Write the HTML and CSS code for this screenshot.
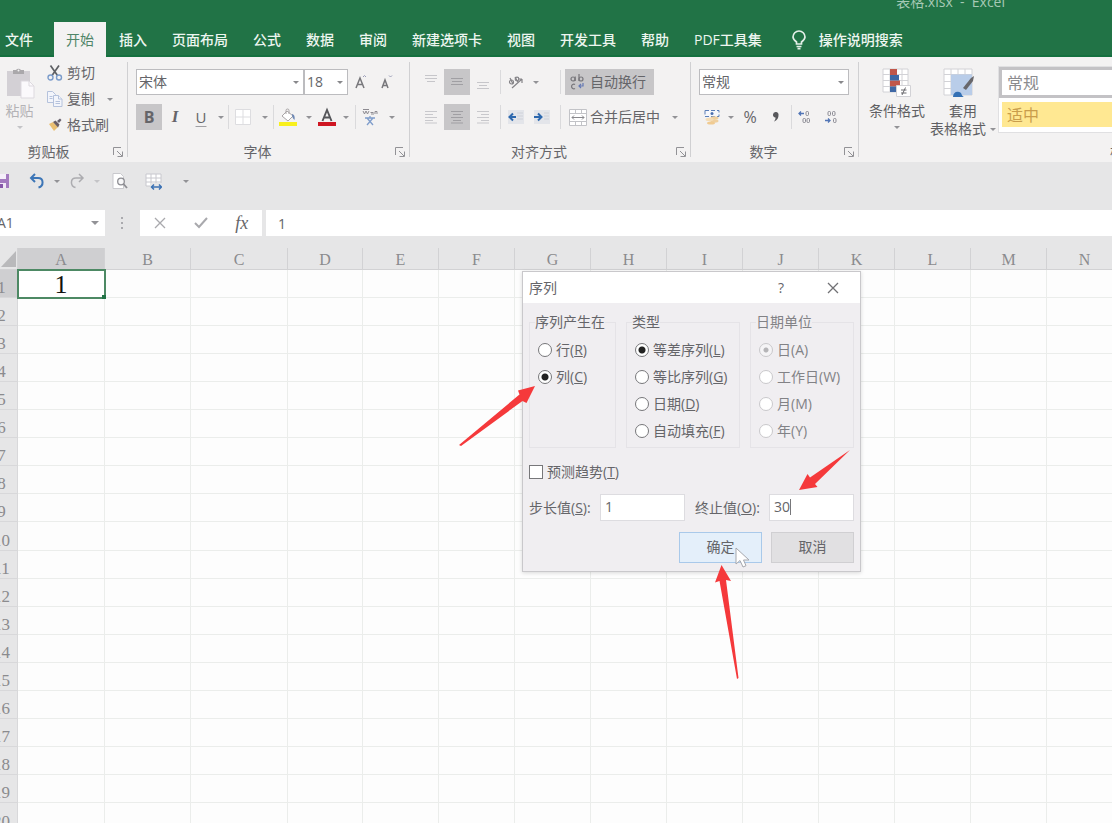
FILE: index.html
```html
<!DOCTYPE html>
<html lang="zh-CN">
<head>
<meta charset="utf-8">
<title>表格.xlsx - Excel</title>
<link rel="stylesheet" href="styles.css">
</head>
<body>
<div class="app">
  <header class="header">
    <div class="titlebar"><span>表格.xlsx&nbsp; -&nbsp; Excel</span></div>
    <nav class="tabs">
      <button class="tab file">文件</button>
      <button class="tab active">开始</button>
      <button class="tab">插入</button>
      <button class="tab">页面布局</button>
      <button class="tab">公式</button>
      <button class="tab">数据</button>
      <button class="tab">审阅</button>
      <button class="tab">新建选项卡</button>
      <button class="tab">视图</button>
      <button class="tab">开发工具</button>
      <button class="tab">帮助</button>
      <button class="tab">PDF工具集</button>
      <button class="tab tell">
        <svg width="16" height="20" viewBox="0 0 16 20" fill="none" stroke="#e3efe8" stroke-width="1.7"><path d="M5.5 14v-2C3 10 2 8.500 2 7a6 6 0 0 1 12 0c0 1.500-1 3-3.500 5v2zM5.500 16.500h5M6.500 18.700h3"/></svg>
        操作说明搜索</button>
    </nav>
  </header>

  <section class="ribbon">
    <div class="group clipboard">
      <div class="clip-body">
        <button class="big paste" disabled>
          <svg width="30" height="32" viewBox="0 0 30 32"><path d="M2 4h23v25H2z" fill="#d3d0d5"/><path d="M8 3h3a3 3 0 0 1 5 0h3v4H8z" fill="#aaa8ab"/><circle cx="13.500" cy="3.500" r="1" fill="#f3f2f2"/><path d="M16 14h8l5 5v12H16z" fill="#fbf9fc" stroke="#ddd9df"/><path d="M24 14v5h5" fill="none" stroke="#ddd9df"/></svg>
          <span>粘贴</span><i class="caret pale"></i>
        </button>
        <div class="clip-list">
          <button class="line"><svg width="16" height="16" viewBox="0 0 16 16" fill="none"><path d="M3.500 0.500l7 10M12 0.500l-7 10" stroke="#5e6064" stroke-width="1.700"/><circle cx="3.500" cy="12.500" r="2.500" stroke="#7b9ccb" stroke-width="1.400"/><circle cx="12" cy="12.500" r="2.500" stroke="#7b9ccb" stroke-width="1.400"/></svg>剪切</button>
          <button class="line"><svg width="16" height="16" viewBox="0 0 16 16" fill="#f3f5fb" stroke="#b5c2dc"><path d="M.5 .5h5l3 3v8h-8z"/><path d="M6.500 4.500h5l3.500 3.500v7.500H6.500z"/><path d="M11.500 4.500V8H15M8.500 10.500h4.500M8.500 12.500h4.500M2.500 5.500h3M2.500 7.500h3"/></svg>复制<i class="caret"></i></button>
          <button class="line"><svg width="16" height="16" viewBox="0 0 16 16"><path d="M2 7l4-2 5 5-4 4z" fill="#eabf72"/><path d="M6 5l2.500-1.500 4 4-1.500 3z" fill="#6b5d62"/><path d="M10 4l3-2.500 1.500 1.500-2.500 3z" fill="#6b6470"/></svg>格式刷</button>
        </div>
      </div>
      <div class="foot"><span>剪贴板</span><svg class="launch" width="10" height="10"><use href="#launch"/></svg></div>
    </div>

    <div class="group font">
      <div class="row">
        <span class="pick font-name"><select aria-label="字体"><option>宋体</option></select></span><span class="pick font-size"><select aria-label="字号"><option>18</option></select></span>
        <button class="tool" aria-label="增大字号"><svg width="16" height="16" viewBox="0 0 16 16" fill="none" stroke="#77777b" stroke-width="1.500"><path d="M3 14L7 4l4 10M4.500 10.500h5"/><path d="M10 3l1.500-1.500L13 3" stroke="#9a9db8" stroke-width="1"/></svg></button>
        <button class="tool" aria-label="减小字号"><svg width="16" height="16" viewBox="0 0 16 16" fill="none" stroke="#77777b" stroke-width="1.500"><path d="M3 14l3-8 3 8M4 11.500h4"/><path d="M10 1.500L11.500 3 13 1.500" stroke="#9a9db8" stroke-width="1"/></svg></button>
      </div>
      <div class="row">
        <button class="tool on bold">B</button><button class="tool italic">I</button><button class="tool under">U</button><button class="drop short" aria-label="下划线选项"><i class="caret"></i></button>
        <i class="sep"></i>
        <button class="tool wide" aria-label="边框"><svg width="16" height="16" viewBox="0 0 16 16"><path d="M.5 .5h15v15H.5zM8 0v16M0 8h16" fill="#fff" stroke="#dddde0"/></svg></button><button class="drop" aria-label="边框选项"><i class="caret"></i></button>
        <i class="sep"></i>
        <button class="tool wide" aria-label="填充颜色"><svg width="20" height="20" viewBox="0 0 20 20"><path d="M4 9l5-5 6 5-5 5z" fill="#fff" stroke="#a9a5a6"/><path d="M8 7V3.500a1.500 1.500 0 0 1 3 0V7" fill="none" stroke="#a9a5a6"/><path d="M14 7c2.500.5 3 3 2.500 6-1.500-1-2.500-3-2.500-6z" fill="#6d88b5"/><path d="M1 15h18v4H1z" fill="#f8f01d"/></svg></button><button class="drop short" aria-label="填充选项"><i class="caret"></i></button>
        <button class="tool slim" aria-label="字体颜色"><svg width="18" height="20" viewBox="0 0 18 20"><path d="M4.500 14L9 3l4.500 11M6 10.500h6" fill="none" stroke="#55565a" stroke-width="1.900"/><path d="M0 15h18v4H0z" fill="#cf1622"/></svg></button><button class="drop" aria-label="字体颜色选项"><i class="caret"></i></button>
        <i class="sep pinyin-sep"></i>
        <button class="tool wide" aria-label="拼音"><svg width="16" height="18" viewBox="0 0 16 18" fill="none"><path d="M1 3l1.500 3L4 3l1.500 3L7 3M8.500 4.500h3M9 6h3M13 6V3.500h2V6M1 1.500h6" stroke="#8d8b91"/><path d="M3 10h10M8 8v2M5 10l6 7M11 10l-6 7" stroke="#7f9dcb" stroke-width="1.300"/></svg></button><button class="drop" aria-label="拼音选项"><i class="caret"></i></button>
      </div>
      <div class="foot"><span>字体</span><svg class="launch" width="10" height="10"><use href="#launch"/></svg></div>
    </div>

    <div class="group align">
      <div class="row">
        <button class="tool" aria-label="顶端对齐"><svg width="14" height="16" viewBox="0 0 14 16" stroke="#c6c6ca"><path d="M1 1.500h12M1 4.500h12M3 7.500h8"/></svg></button><button class="tool on" aria-label="垂直居中"><svg width="14" height="14" viewBox="0 0 14 14" stroke="#a09fa3"><path d="M1 3.500h12M2 6.500h10M1 9.500h12"/></svg></button><button class="tool" aria-label="底端对齐"><svg width="14" height="16" viewBox="0 0 14 16" stroke="#c6c6ca"><path d="M1 8.500h12M3 11.500h8M1 14.500h12"/></svg></button>
        <i class="sep"></i>
        <button class="tool" aria-label="方向"><svg width="16" height="16" viewBox="0 0 16 16" fill="none" stroke="#858488" stroke-width="1.200"><path d="M4 14L14 5M14 5h-4M14 5v4"/><circle cx="3.500" cy="8" r="2"/><path d="M5 10L2 4M7 3l3 5"/><circle cx="9" cy="5" r="1.800"/></svg></button><button class="drop tight" aria-label="方向选项"><i class="caret"></i></button>
        <i class="sep push"></i>
        <button class="label-btn on"><svg width="16" height="18" viewBox="0 0 16 18" fill="none" stroke="#77767b" stroke-width="1.200"><circle cx="4" cy="6" r="2"/><path d="M6.200 3.500V8M10 1v7"/><circle cx="12" cy="6" r="2"/><path d="M6 11.500a2.300 2.300 0 1 0 0 4"/><path d="M14 10v3h-4M12 11l-2 2 2 2" stroke="#6478b4"/></svg>自动换行</button>
      </div>
      <div class="row">
        <button class="tool" aria-label="左对齐"><svg width="14" height="14" viewBox="0 0 14 14" stroke="#c8c8cc"><path d="M1 1.500h12M1 4.500h8M1 7.500h12M1 10.500h8M1 13h12"/></svg></button><button class="tool on" aria-label="居中"><svg width="14" height="14" viewBox="0 0 14 14" stroke="#a09fa3"><path d="M1 1.500h12M3 4.500h8M1 7.500h12M3 10.500h8M1 13h12"/></svg></button><button class="tool" aria-label="右对齐"><svg width="14" height="14" viewBox="0 0 14 14" stroke="#c8c8cc"><path d="M1 1.500h12M5 4.500h8M1 7.500h12M5 10.500h8M1 13h12"/></svg></button>
        <i class="sep"></i>
        <button class="tool" aria-label="减少缩进"><svg width="16" height="14" viewBox="0 0 16 14"><path d="M0 0h16v14H0z" fill="#e3e5ea"/><path d="M9 3h6M9 6h6M9 9h6" stroke="#cfd2d9"/><path d="M8 7H2M5 3.500L1.500 7 5 10.500" fill="none" stroke="#2d68ae" stroke-width="2"/></svg></button><button class="tool" aria-label="增加缩进"><svg width="16" height="14" viewBox="0 0 16 14"><path d="M0 0h16v14H0z" fill="#e3e5ea"/><path d="M10 3h5M10 6h5M10 9h5" stroke="#cfd2d9"/><path d="M0 7h7M4 3.500L7.500 7 4 10.500" fill="none" stroke="#2d68ae" stroke-width="2"/></svg></button>
        <i class="sep push-s"></i>
        <button class="label-btn merge"><svg width="18" height="17" viewBox="0 0 18 17" fill="none" stroke="#c2c3c7"><path d="M.5 .5h17v16H.5zM.500 4.500h17M.500 12.500h17M6.500 .500v4M12.500 .500v4M6.500 12.500v4M12.500 12.500v4" fill="#fff"/><path d="M3 8.500h12M5 6.500l-2 2 2 2M13 6.500l2 2-2 2" stroke="#88888c"/></svg>合并后居中<i class="caret"></i></button>
      </div>
      <div class="foot"><span>对齐方式</span><svg class="launch" width="10" height="10"><use href="#launch"/></svg></div>
    </div>

    <div class="group number">
      <div class="row"><span class="pick format"><select aria-label="数字格式"><option>常规</option></select></span></div>
      <div class="row">
        <button class="tool" aria-label="会计数字格式"><svg width="16" height="16" viewBox="0 0 16 16"><path d="M1 1.500h14v6H1z" fill="#f5f7fc" stroke="#5b7fb8" stroke-dasharray="4 2"/><circle cx="8" cy="4.500" r="1.500" fill="#4b70b0"/><ellipse cx="10.500" cy="9" rx="4" ry="1.700" fill="#efcf9e"/><ellipse cx="10.500" cy="12" rx="4" ry="1.700" fill="#efcf9e"/><ellipse cx="5.500" cy="10.500" rx="4" ry="1.700" fill="#f4dcb5"/><ellipse cx="7" cy="14" rx="4" ry="1.600" fill="#f0cb92"/></svg></button><button class="drop slim-drop" aria-label="货币选项"><i class="caret"></i></button><button class="tool percent">%</button><button class="tool" aria-label="千位分隔"><svg width="8" height="12" viewBox="0 0 8 12"><path d="M4 1a2.500 2.500 0 0 1 2.500 3C6.500 8 4 10 2 10.500c1-1.500 1.700-2.500 1.500-4A2.600 2.600 0 0 1 4 1z" fill="#58585c"/></svg></button>
        <i class="sep num-sep"></i>
        <button class="tool" aria-label="增加小数位数"><svg width="16" height="16" viewBox="0 0 16 16" fill="none" stroke="#8a8a93"><path d="M7 4.500H2M4 2.500l-2 2 2 2" stroke="#5175b6" stroke-width="1.300"/><rect x="9" y="2.500" width="2.500" height="4" rx="1"/><rect x="6" y="9.500" width="2.500" height="4" rx="1"/><rect x="10" y="9.500" width="2.500" height="4" rx="1"/></svg></button><button class="tool" aria-label="减少小数位数"><svg width="16" height="16" viewBox="0 0 16 16" fill="none" stroke="#8a8a93"><rect x="5" y="2.500" width="2.500" height="4" rx="1"/><rect x="9.500" y="2.500" width="2.500" height="4" rx="1"/><rect x="10.500" y="9.500" width="2.500" height="4" rx="1"/><path d="M2 11.500h5M5 9.500l2 2-2 2" stroke="#5175b6" stroke-width="1.300"/></svg></button>
      </div>
      <div class="foot"><span>数字</span><svg class="launch" width="10" height="10"><use href="#launch"/></svg></div>
    </div>

    <div class="group styles">
      <div class="style-body">
        <button class="big cond">
          <svg width="30" height="30" viewBox="0 0 30 30"><path d="M1 1h25v23H1zM1 6.500h25M1 12.500h25M1 18.500h25M8 1v23M20 1v23" fill="#fff" stroke="#d2d2d6"/><path d="M8 1h7v6H8zM8 12.500h10v6H8z" fill="#c0564a"/><path d="M8 7h9v5.500H8zM8 18.500h6V24H8z" fill="#3f68a5"/><path d="M14.500 17.500h14v11h-14z" fill="#fff" stroke="#d2d2d6"/><path d="M19 22h5.500M19 25h5.500M23.500 19.500l-3.500 7.500" stroke="#6a6a6f"/></svg>
          <span>条件格式</span><i class="caret"></i>
        </button>
        <button class="big tablefmt">
          <svg width="32" height="30" viewBox="0 0 32 30"><path d="M1 1h28v26H1zM1 6.500h28M1 13.500h28M1 20.500h28M8 1v26M15 1v26M22 1v26" fill="#fff" stroke="#d2d2d6"/><path d="M8 6.500h21v20.500H8z" fill="#b9cde9"/><path d="M10 29c0-4 3-6 6-5 3 0 2 4 5 5z" fill="#3470b4"/><path d="M20 20l8-10 3-2-1 5-7 9z" fill="#68676b"/></svg>
          <span>套用<br>表格格式<i class="caret"></i></span>
        </button>
        <div class="gallery"><button class="swatch normal">常规</button><button class="swatch neutral">适中</button></div>
      </div>
      <div class="foot"><span>样式</span></div>
    </div>
  </section>

  <section class="quick">
    <button class="q save" aria-label="保存"><svg width="16" height="16" viewBox="0 0 16 16"><path d="M1 1h14v14H1z" fill="#a37abf"/><path d="M4 1h8v5H4z" fill="#f5effa"/><path d="M4 10h8v5H4z" fill="#f0e8f6"/><path d="M6 11h3v4H6z" fill="#8657a9"/></svg></button>
    <button class="q undo" aria-label="撤消"><svg width="16" height="16" viewBox="0 0 16 16" fill="none" stroke="#3d76b7" stroke-width="2"><path d="M6 1L2 5l4 4M2 5h7c6 0 6 8 .5 9.500"/></svg></button>
    <button class="drop" aria-label="撤消选项"><i class="caret"></i></button>
    <button class="q redo" aria-label="恢复"><svg width="16" height="16" viewBox="0 0 16 16" fill="none" stroke="#acacb0" stroke-width="1.500"><path d="M10 1l4 4-4 4M14 5H7C1 5 1 13 6.500 14.500"/></svg></button>
    <button class="drop" aria-label="恢复选项"><i class="caret pale"></i></button>
    <button class="q preview" aria-label="打印预览"><svg width="16" height="16" viewBox="0 0 16 16" fill="none"><path d="M1 .5h7.500l3 3v12H1z" fill="#fff" stroke="#c9c9cd"/><circle cx="9" cy="8.500" r="3.300" fill="#f7f7f8" stroke="#8d8d92" stroke-width="1.300"/><path d="M11.500 11l3.500 4" stroke="#8d8d92" stroke-width="1.800"/></svg></button>
    <button class="q" aria-label="列宽"><svg width="17" height="17" viewBox="0 0 17 17"><path d="M1 1h15v12H1zM1 5h15M1 9h15M6 1v12M11 1v12" fill="#fff" stroke="#c8c8ce"/><path d="M5 10h12v7H5z" fill="#e6e6e7"/><path d="M7 14h9M9 11.500L6.500 14 9 16.500M14 11.500l2.500 2.500-2.500 2.500" fill="none" stroke="#3c72b4" stroke-width="1.500"/></svg></button>
    <button class="drop more" aria-label="自定义快速访问工具栏"><i class="caret"></i></button>
  </section>

  <section class="formula">
    <label class="name-box"><input value="A1" aria-label="名称框"><i class="caret big-caret"></i></label>
    <svg class="dots" width="3" height="14" fill="#aaaaae"><path d="M0 1h2v2H0zM0 6h2v2H0zM0 11h2v2H0z"/></svg>
    <div class="fx-box">
      <button aria-label="取消输入"><svg width="12" height="12" viewBox="0 0 12 12" stroke="#a9a9ad" stroke-width="1.300"><path d="M1 1l10 10M11 1L1 11"/></svg></button>
      <button aria-label="输入"><svg width="14" height="12" viewBox="0 0 14 12" fill="none" stroke="#a9a9ad" stroke-width="2"><path d="M1 6l4 4 8-9"/></svg></button>
      <button class="fx">fx</button>
    </div>
    <input class="formula-input" value="1" aria-label="编辑栏">
  </section>

  <main class="sheet">
    <table class="grid">
      <colgroup><col class="c-head"><col class="c-a"><col class="c-b"><col class="c-c"><col class="c-d"><col span="10" class="c-std"></colgroup>
      <thead><tr id="letters"><td class="corner"><svg width="15" height="16" viewBox="0 0 15 16"><path d="M15 0v16H0z" fill="#b9b9bb"/></svg></td></tr></thead>
      <tbody id="cells"></tbody>
    </table>
  </main>
</div>

<form class="dialog" role="dialog" aria-label="序列">
  <div class="dlg-title"><span>序列</span><button type="button" class="help">?</button><button type="button" class="close" aria-label="关闭"><svg width="12" height="12" viewBox="0 0 12 12" stroke="#717175" stroke-width="1.300"><path d="M1 1l10 10M11 1L1 11"/></svg></button></div>
  <div class="dlg-body">
    <div class="sets">
      <fieldset class="set-in"><legend>序列产生在</legend>
        <label><input type="radio" name="in"><span>行(<u>R</u>)</span></label>
        <label><input type="radio" name="in" checked><span>列(<u>C</u>)</span></label>
      </fieldset>
      <fieldset class="set-type"><legend>类型</legend>
        <label><input type="radio" name="type" checked><span>等差序列(<u>L</u>)</span></label>
        <label><input type="radio" name="type"><span>等比序列(<u>G</u>)</span></label>
        <label><input type="radio" name="type"><span>日期(<u>D</u>)</span></label>
        <label><input type="radio" name="type"><span>自动填充(<u>F</u>)</span></label>
      </fieldset>
      <fieldset class="set-unit" disabled><legend>日期单位</legend>
        <label><input type="radio" name="unit" checked><span>日(A)</span></label>
        <label><input type="radio" name="unit"><span>工作日(W)</span></label>
        <label><input type="radio" name="unit"><span>月(M)</span></label>
        <label><input type="radio" name="unit"><span>年(Y)</span></label>
      </fieldset>
    </div>
    <label class="trend"><input type="checkbox"><span>预测趋势(<u>T</u>)</span></label>
    <div class="values">
      <label for="step">步长值(<u>S</u>):</label><input id="step" value="1">
      <label for="stop">终止值(<u>O</u>):</label><input id="stop" value="30">
      <i class="text-cursor"></i>
    </div>
    <div class="actions"><button type="button" class="ok">确定</button><button type="button">取消</button></div>
  </div>
  <svg class="pointer" width="15" height="22" viewBox="0 0 15 22"><path d="M1 1v16l4-3.500L8 20l3-1.300L8.500 13H14z" fill="#fff" stroke="#a6a7ad"/></svg>
</form>

<svg class="notes" fill="#f5393b">
  <path d="M535 386L518 390.500 519.500 394.500 459 445 461 446 522.500 401 526.500 403z"/>
  <path d="M799 490L807.500 474 810 477.500 850 450 815 484 817.500 487z"/>
  <path d="M721.500 565L715 582.500 719.500 581 737 679 738.500 678 726 580 731 581z"/>
</svg>

<svg width="0" height="0" class="defs"><symbol id="launch" viewBox="0 0 10 10"><path d="M.5 8V.5H8M4 4l5 5M9.500 4.500v5h-5" fill="none" stroke="#929296"/></symbol></svg>
<script src="sheet.js"></script>
</body>
</html>
```
FILE: styles.css
```css
* { box-sizing: border-box; }
body {
  margin: 0;
  position: relative;
  height: 100vh;
  overflow: hidden;
  font-family: "Open Sans", "Noto Sans CJK SC", sans-serif;
  font-size: 14px;
  line-height: 20px;
  color: #656569;
  background: #fdfdfd;
}
button, input, select { font: inherit; color: inherit; }
button { border: 0; padding: 0; background: none; display: flex; align-items: center; justify-content: center; white-space: nowrap; }
svg { display: block; flex: none; }
.defs { position: absolute; }
.app { height: 100%; display: flex; flex-direction: column; overflow: hidden; }

/* title and tabs */
.header { flex: none; background: #217346; border-bottom: 2px solid #14703f; }
.titlebar { height: 22px; display: flex; justify-content: flex-end; padding-right: 107px; overflow: hidden; color: #a6c9b5; }
.titlebar span { margin-top: -8px; white-space: pre; }
.tabs { display: flex; gap: 1px; height: 33px; }
.tab { padding: 0 12px; color: #edf6f0; font-weight: 500; height: 35px; }
.tab.file { padding: 0 5px; margin-right: 15px; }
.tab.active { background: #f3f2f2; color: #4f8568; font-weight: 400; }
.tab.tell { padding-left: 16px; gap: 12px; }

/* carets */
.caret { width: 0; height: 0; border: 3px solid transparent; border-top-color: #929296; border-bottom: 0; flex: none; }
.caret.pale { border-top-color: #c4c4c7; }
.caret.big-caret { border-width: 4px 4px 0; }

/* ribbon */
.ribbon { flex: none; display: flex; height: 105px; background: #f3f2f2; overflow: hidden; }
.group { flex: none; position: relative; display: flex; flex-direction: column; padding: 12px 0 0 9px; }
.group::after { content: ""; position: absolute; right: 0; top: 5px; bottom: 5px; width: 1px; background: #d0d0d2; }
.row { display: flex; align-items: center; height: 26px; margin-bottom: 9px; }
.foot { display: flex; align-items: center; justify-content: center; height: 20px; margin-top: auto; }
.foot span { flex: 1; text-align: center; padding-right: 16px; }
.launch { margin-right: 5px; }
.clipboard { width: 128px; padding: 3px 0 0; }
.font { width: 282px; padding-left: 8px; }
.align { width: 281px; padding-left: 8px; }
.number { width: 168px; padding-left: 8px; }
.styles { flex: 1 1 0; min-width: 0; overflow: hidden; padding: 9px 0 0 10px; }
.styles::after { display: none; }
.clip-body { display: flex; }
.big { flex-direction: column; justify-content: flex-start; line-height: 18px; color: #5f5f63; }
.big .caret { margin-top: 6px; }
.paste { width: 39px; padding-top: 7px; color: #b4b3b6; margin-right: 8px; }
.paste span { margin-top: 3px; }
.clip-list { display: flex; flex-direction: column; }
.line { height: 26px; gap: 4px; justify-content: flex-start; }
.line .caret { margin-left: 8px; }
.tool { width: 26px; height: 26px; flex: none; }
.tool.wide { width: 28px; }
.tool.slim { width: 22px; }
.on { background: #c7c6c8; }
.drop { width: 16px; height: 26px; flex: none; }
.drop.short { width: 14px; }
.drop.tight { width: 14px; }
.drop.slim-drop { width: 12px; }
.sep { width: 1px; height: 24px; background: #dadadc; flex: none; }
.sep.pinyin-sep { margin-left: 1px; }
.sep.num-sep { margin-left: 2px; }
.bold { font-weight: 700; font-size: 16px; }
.italic { font-weight: 700; font-style: italic; font-size: 17px; font-family: "Liberation Serif", serif; }
.under { text-decoration: underline 1px #a0a0a4; text-underline-offset: 3px; font-size: 15px; }
.percent { font-size: 16px; }
.pick { position: relative; display: flex; height: 26px; }
.pick select { appearance: none; width: 100%; border: 1px solid #bcbcbf; border-radius: 0; background: #fff; padding: 0 2px; outline: 0; }
.pick::after { content: ""; position: absolute; right: 5px; top: 12px; border: 3px solid transparent; border-top-color: #88888b; border-bottom: 0; }
.font-name { width: 168px; }
.font-size { width: 44px; }
.format { width: 150px; }
.align .sep { margin: 0 2px 0 4px; }
.align .sep.push { margin: 0 4px 0 17px; }
.align .sep.push-s { margin: 0 4px 0 5px; }
.label-btn { height: 26px; padding: 0 8px 0 4px; gap: 5px; }
.label-btn.merge { gap: 3px; }
.label-btn .caret { margin-left: 9px; }
.style-body { display: flex; }
.cond { width: 60px; padding-top: 2px; }
.cond span, .tablefmt span { margin-top: 4px; }
.tablefmt { width: 68px; padding-top: 2px; margin-right: 5px; }
.tablefmt span .caret { display: inline-block; margin: 0 0 3px 4px; }
.tablefmt span { padding-left: 8px; }
.gallery { flex: 1 0 200px; height: 67px; background: #fff; border: 1px solid #e0e0e2; display: flex; flex-direction: column; gap: 4px; }
.swatch { font-size: 16px; justify-content: flex-start; }
.swatch.normal { height: 31px; border: 3px solid #c3c2c5; padding-left: 5px; color: #8b8b8e; }
.swatch.neutral { height: 25px; margin-left: 3px; padding-left: 5px; background: #ffe892; color: #c99d4c; }
.styles .foot { justify-content: flex-start; }
.styles .foot span { text-align: left; padding: 0 0 0 241px; white-space: nowrap; }

/* quick access */
.quick { flex: none; height: 38px; display: flex; align-items: center; background: #e6e6e7; }
.q { width: 24px; height: 24px; }
.save { margin-left: -10px; margin-right: 11px; }
.preview { margin: 0 9px 0 3px; }
.more { margin-left: 13px; }

/* formula bar */
.formula { flex: none; height: 48px; display: flex; align-items: center; background: #e6e6e7; padding-bottom: 2px; }
.formula input { border: 0; background: #fff; outline: 0; }
.name-box { width: 105px; height: 26px; background: #fff; display: flex; align-items: center; overflow: hidden; }
.name-box input { width: 94px; margin-left: -3px; padding: 0; flex: none; }
.dots { margin: 0 16px; }
.fx-box { display: flex; width: 122px; height: 26px; background: #fff; margin-right: 4px; }
.fx-box button { flex: 1; }
.fx { font-family: "Liberation Serif", serif; font-style: italic; font-size: 18px; }
.formula-input { flex: 1; min-width: 0; height: 26px; padding: 0 12px; }

/* sheet */
.sheet { flex: 1; min-height: 0; overflow: hidden; background: #fdfdfd; }
.grid { table-layout: fixed; border-collapse: separate; border-spacing: 0; width: 1137px; margin-left: -14px; font-family: "Liberation Serif", serif; font-size: 16px; }
.c-head { width: 32px; }
.c-a { width: 87px; }
.c-b { width: 86px; }
.c-c { width: 97px; }
.c-d { width: 75px; }
.c-std { width: 76px; }
.grid td, .grid th { padding: 0; height: 28px; border-right: 1px solid #ebedeb; border-bottom: 1px solid #ebedeb; font-weight: 400; }
.grid thead th, .grid thead td { height: 22px; line-height: 18px; background: #e6e6e7; border-color: #d2d2d4; color: #8b8b8e; vertical-align: bottom; }
.grid thead .corner svg { margin: 0 1px 2px auto; }
.grid tbody th { background: #e6e6e7; color: #8b8b8e; border-color: #d8d8da; line-height: 18px; vertical-align: bottom; font-size: 17px; }
.grid tbody tr:nth-child(10n) td, .grid tbody tr:nth-child(10n) th { height: 29px; }
.grid thead th.current, .grid tbody th.current { background: #cfcfd1; }
.grid td.selected { position: relative; outline: 2px solid #4d8964; outline-offset: -1px; text-align: center; vertical-align: bottom; color: #111; font-size: 26px; line-height: 24px; background: #fff; }
.handle { position: absolute; right: -2px; bottom: -2px; width: 4px; height: 4px; background: #217346; }

/* series dialog */
.dialog { position: absolute; left: 522px; top: 271px; width: 339px; background: #f0eef1; border: 1px solid #c9c8cb; box-shadow: 0 1px 4px rgba(0, 0, 0, .15); }
.dlg-title { display: flex; align-items: center; height: 31px; background: #fff; padding: 0 21px 0 6px; }
.dlg-title span { flex: 1; }
.help { width: 20px; margin-right: 36px; }
.dlg-body { padding: 9px 6px 8px; }
.sets { display: flex; gap: 10px; }
fieldset { margin: 0; min-width: 0; padding: 4px 0 3px 8px; border: 1px solid #e5e3e7; height: 136px; }
.set-in { width: 87px; flex: none; }
.set-type { width: 114px; flex: none; }
.set-unit { flex: 1; }
legend { padding: 0; margin-left: -3px; }
fieldset label { display: flex; align-items: center; height: 27px; gap: 4px; white-space: nowrap; }
input[type="radio"] { appearance: none; flex: none; width: 14px; height: 14px; margin: 0; border: 1px solid #77777a; border-radius: 50%; background: #fff; }
input[type="radio"]:checked { background: radial-gradient(circle, #222 0 3px, #fff 4px); }
fieldset:disabled { color: #828286; }
fieldset:disabled input { border-color: #c9c8cb; }
fieldset:disabled input:checked { background: radial-gradient(circle, #b5b4b7 0 2px, #f5f4f6 3px); }
.trend { display: flex; align-items: center; gap: 4px; height: 24px; margin-top: 12px; }
.trend input { appearance: none; width: 14px; height: 14px; margin: 0; border: 1px solid #77777a; background: #fff; }
.values { position: relative; display: grid; grid-template-columns: 71px 85px 84px 85px; align-items: center; margin-top: 10px; white-space: nowrap; }
.values label[for="stop"] { padding-left: 10px; }
.values input { min-width: 0; width: 100%; height: 27px; border: 1px solid #dddce0; border-radius: 0; background: #fff; padding: 0 4px 2px; outline: 0; }
.text-cursor { position: absolute; right: 63px; top: 5px; width: 1px; height: 16px; background: #77777a; }
.actions { display: flex; justify-content: flex-end; gap: 9px; margin-top: 11px; }
.actions button { width: 83px; height: 31px; background: #e1e0e2; border: 1px solid #d0cfd2; padding-bottom: 1px; }
.actions .ok { background: #e4effa; border-color: #a9c9ea; }
.pointer { position: absolute; left: 212px; top: 275px; }
.notes { position: absolute; left: 0; top: 0; width: 100%; height: 100%; pointer-events: none; }
```
FILE: sheet.js
```js
const letters = document.getElementById("letters");
const cells = document.getElementById("cells");
const columns = "ABCDEFGHIJKLMN".split("");

columns.forEach((name, i) => {
  const th = document.createElement("th");
  th.textContent = name;
  if (i === 0) th.className = "current";
  letters.append(th);
});

for (let r = 1; r <= 20; r++) {
  const tr = document.createElement("tr");
  const th = document.createElement("th");
  th.textContent = r;
  if (r === 1) th.className = "current";
  tr.append(th);
  columns.forEach((_, i) => {
    const td = document.createElement("td");
    if (r === 1 && i === 0) {
      td.className = "selected";
      td.textContent = "1";
      const handle = document.createElement("i");
      handle.className = "handle";
      td.append(handle);
    }
    tr.append(td);
  });
  cells.append(tr);
}
```
